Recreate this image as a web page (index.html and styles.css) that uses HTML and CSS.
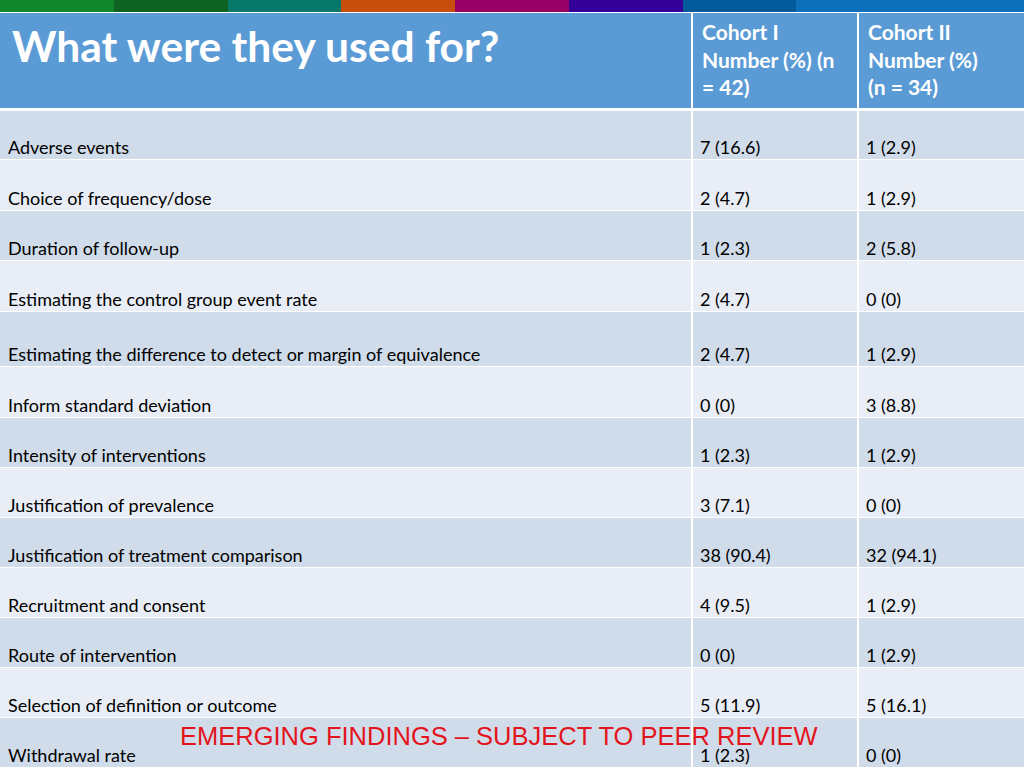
FILE: index.html
```html
<!DOCTYPE html>
<html>
<head>
<meta charset="utf-8">
<link rel="stylesheet" href="styles.css">
</head>
<body>
<div class="bar">
  <span class="s1"></span><span class="s2"></span><span class="s3"></span><span class="s4"></span><span class="s5"></span><span class="s6"></span><span class="s7"></span><span class="s8"></span><span class="s8"></span>
</div>
<div class="grid">
  <div class="hd title">What were they used for?</div>
  <div class="hd col">Cohort I<br>Number (%) (n<br>= 42)</div>
  <div class="hd col">Cohort II<br>Number (%)<br>(n = 34)</div>

  <div class="c d">Adverse events</div><div class="c d n1">7 (16.6)</div><div class="c d n2">1 (2.9)</div>
  <div class="c l">Choice of frequency/dose</div><div class="c l n1">2 (4.7)</div><div class="c l n2">1 (2.9)</div>
  <div class="c d">Duration of follow-up</div><div class="c d n1">1 (2.3)</div><div class="c d n2">2 (5.8)</div>
  <div class="c l">Estimating the control group event rate</div><div class="c l n1">2 (4.7)</div><div class="c l n2">0 (0)</div>
  <div class="c d">Estimating the difference to detect or margin of equivalence</div><div class="c d n1">2 (4.7)</div><div class="c d n2">1 (2.9)</div>
  <div class="c l">Inform standard deviation</div><div class="c l n1">0 (0)</div><div class="c l n2">3 (8.8)</div>
  <div class="c d">Intensity of interventions</div><div class="c d n1">1 (2.3)</div><div class="c d n2">1 (2.9)</div>
  <div class="c l">Justification of prevalence</div><div class="c l n1">3 (7.1)</div><div class="c l n2">0 (0)</div>
  <div class="c d">Justification of treatment comparison</div><div class="c d n1">38 (90.4)</div><div class="c d n2">32 (94.1)</div>
  <div class="c l">Recruitment and consent</div><div class="c l n1">4 (9.5)</div><div class="c l n2">1 (2.9)</div>
  <div class="c d">Route of intervention</div><div class="c d n1">0 (0)</div><div class="c d n2">1 (2.9)</div>
  <div class="c l">Selection of definition or outcome</div><div class="c l n1">5 (11.9)</div><div class="c l n2">5 (16.1)</div>
  <div class="c d">Withdrawal rate</div><div class="c d n1">1 (2.3)</div><div class="c d n2">0 (0)</div>
</div>
<div class="stamp">EMERGING FINDINGS – SUBJECT TO PEER REVIEW</div>
</body>
</html>
```
FILE: styles.css
```css
html, body {
  margin: 0;
  padding: 0;
  background: #ffffff;
  width: 1024px;
  height: 768px;
  overflow: hidden;
  font-family: Lato, "Open Sans", sans-serif;
  position: relative;
}
.bar {
  display: flex;
  height: 12px;
  margin-bottom: 1px;
}
.bar span { flex: 1; }
.s1 { background: #12862a; }
.s2 { background: #0e6322; }
.s3 { background: #07786a; }
.s4 { background: #c84e0e; }
.s5 { background: #990066; }
.s6 { background: #330099; }
.s7 { background: #045b9c; }
.s8 { background: #0b70b9; }

.grid {
  display: grid;
  grid-template-columns: 691px 164px 1fr;
  grid-template-rows: 97px 48px 50px 49px 50px 54px 50px repeat(7, 49px);
  column-gap: 2px;
  row-gap: 1px;
}
.hd {
  background: #5b9bd5;
  color: #ffffff;
  font-weight: 700;
  margin-bottom: 2px;
}
.title {
  font-size: 42.5px;
  line-height: 48px;
  padding: 9px 0 0 12px;
}
.col {
  font-size: 21px;
  line-height: 27.5px;
  padding: 5px 4px 0 9px;
  white-space: nowrap;
}
.c {
  display: flex;
  align-items: flex-end;
  font-size: 18px;
  line-height: 20px;
  color: #000000;
  padding: 0 0 2px 8px;
}
.c.n1, .c.n2 { padding-left: 7px; }
.d { background: #d0dcea; }
.l { background: #e9eef6; }
.stamp {
  position: absolute;
  left: 180px;
  top: 721px;
  font-family: "Liberation Sans", Arial, sans-serif;
  font-size: 25.5px;
  line-height: 30px;
  color: #e3141c;
  white-space: nowrap;
}
```
